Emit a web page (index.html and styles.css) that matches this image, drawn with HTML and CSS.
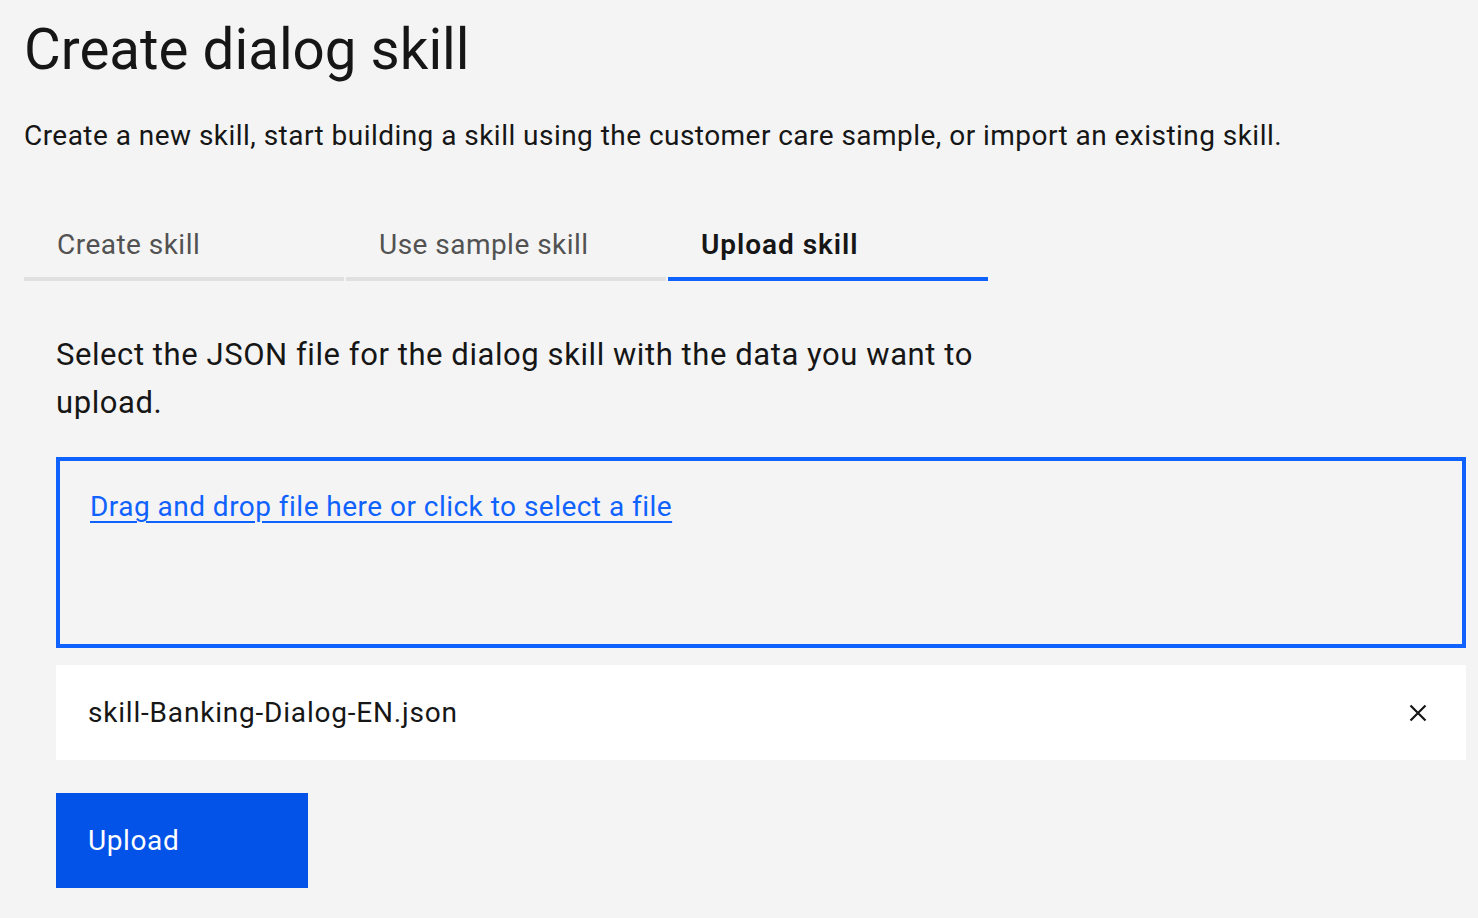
FILE: index.html
```html
<!DOCTYPE html>
<html lang="en">
<head>
<meta charset="utf-8">
<title>Create dialog skill</title>
<link rel="stylesheet" href="styles.css">
</head>
<body>
<main class="page">
  <h1 class="title">Create dialog skill</h1>
  <p class="subtitle">Create a new skill, start building a skill using the customer care sample, or import an existing skill.</p>
  <nav class="tabs">
    <div class="tab">Create skill</div>
    <div class="tab">Use sample skill</div>
    <div class="tab tab-active">Upload skill</div>
  </nav>
  <section class="panel">
    <p class="instructions">Select the JSON file for the dialog skill with the data you want to upload.</p>
    <div class="dropzone">
      <a class="drop-link" href="#">Drag and drop file here or click to select a file</a>
    </div>
    <div class="file-row">
      <span class="file-name">skill-Banking-Dialog-EN.json</span>
      <svg class="close-icon" width="18" height="18" viewBox="0 0 18 18" aria-hidden="true">
        <path d="M1.5 1.5 L16.5 16.5 M16.5 1.5 L1.5 16.5" stroke="#161616" stroke-width="2.2" fill="none"/>
      </svg>
    </div>
    <button class="upload-btn" type="button">Upload</button>
  </section>
</main>
</body>
</html>
```
FILE: styles.css
```css
html, body {
  margin: 0;
  padding: 0;
  background: #f4f4f4;
}
body {
  font-family: "Roboto", "Liberation Sans", sans-serif;
  color: #161616;
}
.page {
  padding: 14px 0 0 24px;
  width: 1442px;
}
.title {
  margin: 0;
  font-weight: 400;
  font-size: 56.5px;
  line-height: 72px;
}
.subtitle {
  margin: 32px 0 0;
  font-size: 28px;
  line-height: 36px;
  letter-spacing: 0.46px;
}
.tabs {
  display: flex;
  gap: 2px;
  margin-top: 65px;
  width: 964px;
}
.tab {
  flex: 0 0 320px;
  box-sizing: border-box;
  padding: 8px 0 14px 33px;
  font-size: 28px;
  line-height: 36px;
  color: #525252;
  letter-spacing: 0.47px;
  border-bottom: 4px solid #e0e0e0;
}
.tab-active {
  color: #161616;
  font-weight: 600;
  letter-spacing: 0.95px;
  border-bottom-color: #0f62fe;
}
.panel {
  padding: 50px 0 0 32px;
}
.instructions {
  margin: 0;
  width: 960px;
  font-size: 31px;
  line-height: 48px;
  letter-spacing: 0.57px;
}
.dropzone {
  margin-top: 30px;
  height: 191px;
  box-sizing: border-box;
  border: 4px solid #0f62fe;
  padding: 26px 30px;
}
.drop-link {
  color: #0f62fe;
  font-size: 28px;
  line-height: 40px;
  letter-spacing: 0.47px;
  text-decoration: underline;
  text-underline-offset: 5px;
  text-decoration-thickness: 2px;
}
.file-row {
  margin-top: 17px;
  height: 95px;
  background: #ffffff;
  display: flex;
  align-items: center;
  justify-content: space-between;
  padding: 0 39px 0 32px;
}
.file-name {
  font-size: 28px;
  line-height: 36px;
  letter-spacing: 0.8px;
}
.upload-btn {
  margin-top: 33px;
  width: 252px;
  height: 95px;
  border: 0;
  background: #0353e9;
  color: #ffffff;
  font-family: inherit;
  font-size: 28px;
  letter-spacing: 0.6px;
  text-align: left;
  padding: 0 0 0 32px;
  cursor: pointer;
}
```
